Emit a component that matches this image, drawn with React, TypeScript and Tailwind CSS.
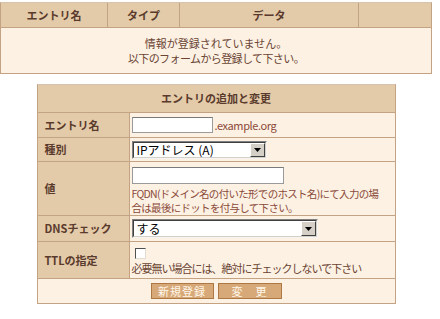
const font = { fontFamily: '"Noto Sans CJK JP", "Liberation Sans", sans-serif' };

function FakeSelect({ width, height, label }: { width: string; height: string; label: string }) {
    return (
        <div className={`${width} ${height} flex border-t border-l border-t-[#808080] border-l-[#808080] border-b border-r border-b-[#f4f4f4] border-r-[#f4f4f4]`}>
            <div className="flex flex-1 border-t border-l border-t-[#404040] border-l-[#404040] border-b border-r border-b-[#d4d0c8] border-r-[#d4d0c8] bg-white">
                <span className="flex-1 pl-[3px] text-[12px] leading-none self-center text-black">{label}</span>
                {/* dropdown button */}
                <div className="w-[15px] flex items-center justify-center bg-[#d4d0c8] border-t border-l border-t-white border-l-white border-b border-r border-b-[#404040] border-r-[#404040]">
                    <svg width="7" height="4" viewBox="0 0 7 4">
                        <path d="M0 0h7L3.5 4z" fill="#000" />
                    </svg>
                </div>
            </div>
        </div>
    );
}

function Row({ label, h, children, top = false }: { label: string; h: string; children: React.ReactNode; top?: boolean }) {
    return (
        <div className={`flex ${h} border-b border-[#c4a384]`}>
            <div className="w-[92px] shrink-0 flex items-center pl-[7px] bg-[#e3cba9] border-r border-[#c4a384] text-[11px] font-bold text-[#5a3a2c]">
                {label}
            </div>
            <div className={`flex-1 bg-[#fdf1e3] pl-[2px] flex ${top ? 'flex-col justify-start' : 'items-center'}`}>
                {children}
            </div>
        </div>
    );
}

export default function App() {
    return (
        <div className="w-[440px] h-[319px] bg-white" style={font}>
            <div className="w-[432px]">
                {/* Entry list */}
                <div className="mt-[2px] border border-[#c4a384] border-t-[#d7c2ad]">
                    <div className="flex h-[25px] bg-[#e3cba9] border-b border-[#c4a384] text-[11px] font-bold text-[#5a3a2c]">
                        <div className="w-[107px] border-r border-[#c4a384] flex items-center justify-center">エントリ名</div>
                        <div className="w-[72px] border-r border-[#c4a384] flex items-center justify-center">タイプ</div>
                        <div className="w-[179px] border-r border-[#c4a384] flex items-center justify-center">データ</div>
                        <div className="flex-1" />
                    </div>
                    <div className="h-[45px] bg-[#fdf1e3] flex flex-col items-center justify-center text-[11px] leading-[15px] text-[#6a4434]">
                        <p>情報が登録されていません。</p>
                        <p className="tracking-[-0.6px]">以下のフォームから登録して下さい。</p>
                    </div>
                </div>

                {/* Add / edit form */}
                <div className="mt-[10px] mx-auto w-[359px] border border-[#c4a384] border-t-[#d7c2ad]">
                    <div className="h-[28px] bg-[#e3cba9] border-b border-[#c4a384] flex items-center justify-center text-[11px] font-bold text-[#5a3a2c]">
                        エントリの追加と変更
                    </div>

                    <Row label="エントリ名" h="h-[25px]">
                        <input type="text" className="w-[81px] h-[16px] bg-white border border-[#9a9a9a] border-t-[#7a7a7a] outline-none" />
                        <span className="ml-[2px] text-[11px] tracking-[-0.4px] text-[#8a4a3a]">.example.org</span>
                    </Row>

                    <Row label="種別" h="h-[24px]">
                        <FakeSelect width="w-[135px]" height="h-[18px]" label="IPアドレス (A)" />
                    </Row>

                    <Row label="値" h="h-[54px]" top>
                        <input type="text" className="mt-[5px] w-[152px] h-[17px] bg-white border border-[#9a9a9a] border-t-[#7a7a7a] outline-none" />
                        <p className="mt-[3px] text-[10.5px] leading-[14px] tracking-[-0.7px] text-[#8a4a3a] whitespace-nowrap">
                            FQDN(ドメイン名の付いた形でのホスト名)にて入力の場<br />合は最後にドットを付与して下さい。
                        </p>
                    </Row>

                    <Row label="DNSチェック" h="h-[26px]">
                        <FakeSelect width="w-[186px]" height="h-[19px]" label="する" />
                    </Row>

                    <Row label="TTLの指定" h="h-[37px]" top>
                        <div className="mt-[6px] ml-[3px] w-[11px] h-[11px] bg-white border-t border-l border-t-[#505050] border-l-[#505050] border-b border-r border-b-[#e0dcd4] border-r-[#e0dcd4]" />
                        <p className="mt-[2px] text-[11px] leading-[14px] tracking-[-1px] text-[#6a4434] whitespace-nowrap">
                            必要無い場合には、絶対にチェックしないで下さい
                        </p>
                    </Row>

                    <div className="h-[24px] bg-[#fdf1e3] flex items-center justify-center gap-[4px]">
                        <button className="w-[63px] h-[16px] bg-[#d8a978] border border-[#ad7844] text-[11px] leading-none text-[#fff7ea] tracking-[1px]">
                            新規登録
                        </button>
                        <button className="w-[64px] h-[16px] bg-[#d8a978] border border-[#ad7844] text-[11px] leading-none text-[#fff7ea] tracking-[1px]">
                            変　更
                        </button>
                    </div>
                </div>
            </div>
        </div>
    );
}
